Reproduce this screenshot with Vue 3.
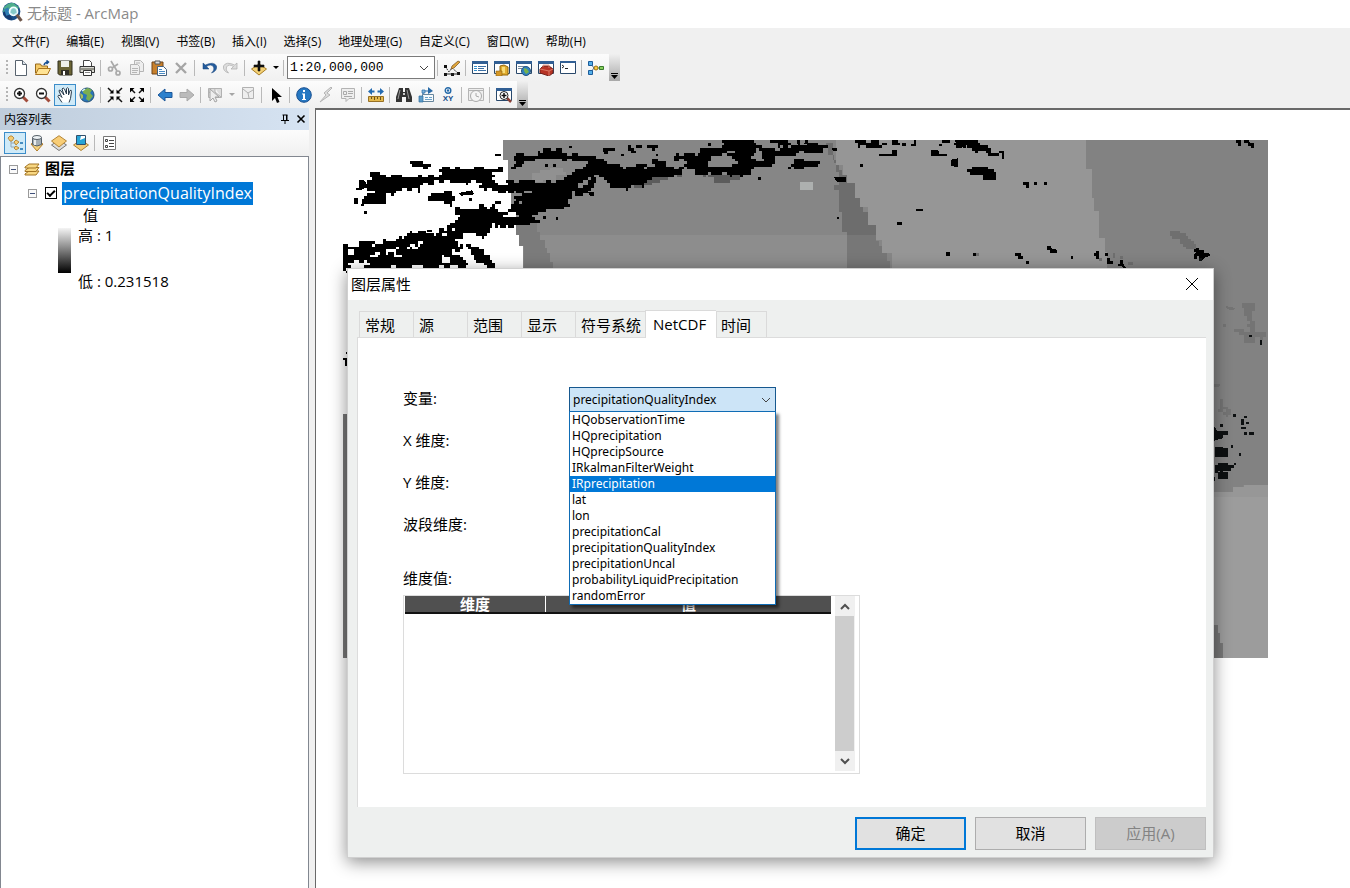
<template>
  <div class="arcmap">
    <header class="title-bar">
      <svg class="app-logo" viewBox="0 0 20 20" v-html="icons.app"></svg>
      <span>无标题 - ArcMap</span>
    </header>

    <nav class="menu-bar">
      <button v-for="menu in menus" :key="menu" type="button" class="menu-item">{{ menu }}</button>
    </nav>

    <div class="toolbars">
      <div v-for="(bar, index) in toolbars" :key="index" class="toolbar" role="toolbar">
        <span class="grip"></span>
        <template v-for="(item, i) in bar" :key="i">
          <span v-if="item === '|'" class="separator"></span>
          <button
            v-else-if="item.startsWith('caret')"
            type="button"
            class="caret"
            :class="{ dim: item === 'caretDim' }"
            aria-label="更多"
          >
            <svg viewBox="0 0 6 3"><path d="M0 0h6L3 3z" /></svg>
          </button>
          <div v-else-if="item === 'scale'" class="scale-box">
            <input v-model="scale" type="text" aria-label="比例" />
            <button type="button" aria-label="选择比例">
              <svg viewBox="0 0 10 6"><path d="M1 1l4 4 4-4" fill="none" stroke="#444" /></svg>
            </button>
          </div>
          <button
            v-else
            type="button"
            class="tool"
            :class="{ active: item === activeTool }"
            :aria-label="item"
            @click="activeTool = item"
          >
            <svg viewBox="0 0 16 16" v-html="icons[item]"></svg>
          </button>
        </template>
        <button type="button" class="overflow" aria-label="工具条选项">
          <svg viewBox="0 0 7 6"><path d="M0 0h7v1H0zM0 2h7L3.500 6z" /></svg>
        </button>
      </div>
    </div>

    <main class="workspace">
      <aside class="toc">
        <div class="toc-header">
          <span>内容列表</span>
          <button type="button" aria-label="自动隐藏">
            <svg viewBox="0 0 10 10"><path d="M2.500 1h5M3.500 1v5M6.500 1v5M7 1v5M1 6.500h8M5 7v3" fill="none" stroke="#000" /></svg>
          </button>
          <button type="button" aria-label="关闭">
            <svg viewBox="0 0 10 10"><path d="M1.500 1.500l7 7M8.500 1.500l-7 7" fill="none" stroke="#000" stroke-width="1.600" /></svg>
          </button>
        </div>
        <div class="toc-tools">
          <button
            v-for="view in tocViews"
            :key="view"
            type="button"
            class="tool"
            :class="{ active: view === tocView }"
            :aria-label="view"
            @click="tocView = view"
          >
            <svg viewBox="0 0 16 16" v-html="icons[view]"></svg>
          </button>
          <span class="separator"></span>
          <button type="button" class="tool" aria-label="选项">
            <svg viewBox="0 0 16 16" v-html="icons.options"></svg>
          </button>
        </div>
        <div class="tree">
          <div class="tree-row root">
            <button type="button" class="expander" aria-label="折叠"></button>
            <svg class="layers-icon" viewBox="0 0 16 16" v-html="icons.layers"></svg>
            <b>图层</b>
          </div>
          <div class="tree-row layer">
            <button type="button" class="expander" aria-label="折叠"></button>
            <input id="layer-visible" v-model="layerVisible" type="checkbox" />
            <label for="layer-visible">precipitationQualityIndex</label>
          </div>
          <div class="legend-title">值</div>
          <div class="legend">
            <span class="ramp"></span>
            <div class="ramp-labels">
              <span>高 : 1</span>
              <span>低 : 0.231518</span>
            </div>
          </div>
        </div>
      </aside>

      <section class="map">
        <svg class="raster" viewBox="0 0 2775 1554" shape-rendering="crispEdges">
          <path v-for="(area, i) in areas" :key="'area' + i" :d="area.d" :fill="area.fill" />
          <path v-for="(layer, i) in cells" :key="'cells' + i" :d="layer.d" :fill="layer.fill" />
        </svg>
      </section>
    </main>

    <div v-if="dialogOpen" class="dialog" role="dialog" aria-labelledby="dialog-title">
      <div class="dialog-title">
        <span id="dialog-title">图层属性</span>
        <button type="button" aria-label="关闭" @click="dialogOpen = false">
          <svg viewBox="0 0 12 12"><path d="M0 0l12 12M12 0L0 12" fill="none" stroke="#000" /></svg>
        </button>
      </div>

      <div class="tabs" role="tablist">
        <button
          v-for="tab in tabs"
          :key="tab"
          type="button"
          role="tab"
          :aria-selected="tab === currentTab"
          :class="{ current: tab === currentTab }"
          @click="currentTab = tab"
        >{{ tab }}</button>
      </div>

      <div class="page">
        <div class="field">
          <label for="variable">变量:</label>
          <div class="combo">
            <select id="variable" v-model="variable">
              <option v-for="name in variables" :key="name">{{ name }}</option>
            </select>
            <svg class="combo-arrow" viewBox="0 0 10 6"><path d="M1 1l4 4 4-4" fill="none" stroke="#444" /></svg>
            <ul class="options" role="listbox">
              <li
                v-for="name in variables"
                :key="name"
                role="option"
                :class="{ hover: name === hovered }"
                @mouseenter="hovered = name"
                @click="variable = name"
              >{{ name }}</li>
            </ul>
          </div>
        </div>
        <div class="field"><span>X 维度:</span></div>
        <div class="field"><span>Y 维度:</span></div>
        <div class="field"><span>波段维度:</span></div>
        <div class="values-label" id="values-label">维度值:</div>
        <div class="values">
          <table aria-labelledby="values-label">
            <thead>
              <tr>
                <th class="dimension">维度</th>
                <th>值</th>
              </tr>
            </thead>
          </table>
          <div class="scrollbar">
            <button type="button" aria-label="向上">
              <svg viewBox="0 0 10 7"><path d="M1 6l4-4 4 4" fill="none" stroke="#505050" stroke-width="2" /></svg>
            </button>
            <span class="thumb"></span>
            <button type="button" aria-label="向下">
              <svg viewBox="0 0 10 7"><path d="M1 1l4 4 4-4" fill="none" stroke="#505050" stroke-width="2" /></svg>
            </button>
          </div>
        </div>
      </div>

      <div class="actions">
        <button type="button" class="primary">确定</button>
        <button type="button" @click="dialogOpen = false">取消</button>
        <button type="button" disabled>应用(A)</button>
      </div>
    </div>
  </div>
</template>

<script setup>
import { ref } from 'vue';

const menus = ['文件(F)', '编辑(E)', '视图(V)', '书签(B)', '插入(I)', '选择(S)', '地理处理(G)', '自定义(C)', '窗口(W)', '帮助(H)'];

const toolbars = [
  ['new', 'open', 'save', 'print', '|', 'cut', 'copy', 'paste', 'remove', '|', 'undo', 'redo', '|',
    'addData', 'caret', '|', 'scale', '|', 'editor', '|', 'toc', 'catalog', 'search', 'toolbox', 'python', '|', 'model'],
  ['zoomIn', 'zoomOut', 'pan', 'globe', '|', 'shrink', 'expand', '|', 'back', 'forward', '|',
    'selectFeature', 'caretDim', 'clear', '|', 'pointer', '|', 'info', 'lightning', 'popup', '|',
    'measure', '|', 'find', 'route', 'xy', '|', 'time', '|', 'viewer'],
];

const tocViews = ['byOrder', 'bySource', 'byVisible', 'bySelection'];
const tabs = ['常规', '源', '范围', '显示', '符号系统', 'NetCDF', '时间'];
const variables = [
  'HQobservationTime',
  'HQprecipitation',
  'HQprecipSource',
  'IRkalmanFilterWeight',
  'IRprecipitation',
  'lat',
  'lon',
  'precipitationCal',
  'precipitationQualityIndex',
  'precipitationUncal',
  'probabilityLiquidPrecipitation',
  'randomError',
];

const scale = ref('1:20,000,000');
const activeTool = ref('pan');
const tocView = ref('byOrder');
const layerVisible = ref(true);
const dialogOpen = ref(true);
const currentTab = ref('NetCDF');
const variable = ref('precipitationQualityIndex');
const hovered = ref('IRprecipitation');

const win = '<path d="M.5 1.500h15v12H.5z" fill="#fff" stroke="#29486b"/><path d="M0 1h16v3H0z" fill="#315f94"/>';
const sheet = '<path d="M2.500 .5h7l4 4v11h-11z" fill="#fff" stroke="#58636e"/><path d="M9.500 .5v4h4" fill="#dde5ec" stroke="#58636e"/>';

const icons = {
  app: '<circle cx="9" cy="9" r="8.500" fill="#1b4f88"/><path d="M2 5q4-5 9-4l5 4-2 4-9 3-4-3z" fill="#4fae8c"/><path d="M1 11q3 6 9 6l-3-6-4-3z" fill="#163b70"/><path d="M2 7l4-2 2 7-4 1z" fill="#2f7fb4"/><circle cx="11" cy="9" r="4" fill="#d2eef5" stroke="#f4ffff" stroke-width="1.200"/><path d="M9 7q2-2 4 0l1 3-3 2-3-2z" fill="#86c9c8"/><path d="M14 12l4.500 6" stroke="#6e564a" stroke-width="3"/>',
  new: sheet,
  open: '<path d="M.5 13V4h5l1 2h6v3" fill="#f5cb68" stroke="#96691c"/><path d="M.5 14.500l3-6h12l-3 6z" fill="#ffe394" stroke="#a8731e"/><path d="M9 5q1-3 4-3M11.500 .5l2 1.500-2 2" fill="none" stroke="#174f92" stroke-width="1.500"/>',
  save: '<path d="M1 1h14v14H2.500L1 13.500z" fill="#6b6434" stroke="#302e1e"/><path d="M4 1h8v6H4z" fill="#f1f1e8"/><path d="M4 10h8v5H4z" fill="#302e26"/><path d="M6 11h2v4H6z" fill="#fff"/>',
  print: '<path d="M4.500 6V.5h6l2 2V6" fill="#fff" stroke="#454545"/><path d="M1 6.500h14.500v6H1z" fill="#d8d8d1" stroke="#333"/><path d="M2 9h13" stroke="#4e4e43"/><path d="M4.500 10.500h8v5h-8z" fill="#fff" stroke="#333"/><path d="M6 12.500h5" stroke="#888"/>',
  cut: '<g fill="none" stroke="#aaa" stroke-width="1.700"><path d="M4 1l6 10M11 4L5 8"/><circle cx="3.500" cy="9" r="2"/><circle cx="11" cy="13" r="2"/></g>',
  copy: '<g fill="#eee" stroke="#b5b5b5"><path d="M5.500 .5h6l3 3v8h-9z"/><path d="M1.500 4.500h7l2 2v8h-9z"/><path d="M3 8.500h6M3 10.500h6M3 12.500h5M7 3h4"/></g>',
  paste: '<path d="M1 2h11v12H1z" fill="#c7802c" stroke="#70451b"/><path d="M4 1h5v3H4z" fill="#ddd" stroke="#555"/><path d="M6.500 6.500h6l3 3v6h-9z" fill="#fff" stroke="#47627e"/><path d="M8 9.500h3M8 11.500h6M8 13.500h6" stroke="#4a8bc4"/>',
  remove: '<path d="M3 3l10 10M13 3L3 13" stroke="#a5a5a5" stroke-width="2.400"/>',
  undo: '<path d="M2 3v6h6L5.500 6.500q5-3 7 .5 1.500 3-2 6 6-2 5-7Q13 1 4.300 5z" fill="#245b9c" stroke="#17457d" stroke-width=".5"/>',
  redo: '<path d="M14 3v6H8l2.500-2.500q-5-3-7 .5-1.500 3 2 6-6-2-5-7Q3 1 11.700 5z" fill="#ddd" stroke="#aaa" stroke-width=".7"/>',
  addData: '<path d="M.5 9L8 4l7.500 5L8 15z" fill="#f4d175" stroke="#a77c24"/><path d="M7 1h2v4h4v2H9v4H7V7H3V5h4z" fill="#111" stroke="#111" stroke-width=".6"/>',
  editor: '<path d="M1 6l4 6 3-4 6 5" stroke="#333" fill="none" stroke-dasharray="2 1"/><path d="M0 5h3v3H0zM0 13h3v3H0zM7 13h3v3H7zM13 12h3v3h-3z" fill="#111"/><path d="M2 14h12" stroke="#222"/><path d="M7 9l1-3 6-5 2 1-6 6z" fill="#e0a63b" stroke="#765020" stroke-width=".7"/>',
  toc: win + '<path d="M2 6.500h3M2 8.500h3M2 10.500h3" stroke="#328ecc"/><path d="M6 6.500h8M6 8.500h6M6 10.500h8" stroke="#3c6fa5"/>',
  catalog: win + '<path d="M6 6l4-1 4 2v8H6z" fill="#e2ae30" stroke="#93660b"/><path d="M8 7h3v6H8z" fill="#f9dd78"/><path d="M2 11h6v5H2z" fill="#d69724" stroke="#8a6114" stroke-width=".6"/>',
  search: win + '<path d="M2 6.500h7M2 8.500h4" stroke="#76889b"/><circle cx="10" cy="11" r="4.500" fill="#2f80be" stroke="#235481"/><path d="M8 8l3 1 2 3-3 2-2-3z" fill="#78b24c"/>',
  toolbox: win + '<path d="M2 9l3-3h6l4 3v4l-4 3-9-3z" fill="#b83425" stroke="#74221a"/><path d="M5 7V5h6v3M2 9l9 2 4-2M11 11v5" fill="none" stroke="#e58a76" stroke-width=".8"/>',
  python: '<path d="M.5 1.500h15v12H.5z" fill="#fff" stroke="#29486b"/><path d="M0 1h16v2H0z" fill="#315f94"/><path d="M2 5l2 1.500L2 8M5 8.500h3" fill="none" stroke="#222"/>',
  model: '<path d="M3 4l3 4h7M3 12l3-4" fill="none" stroke="#546d87"/><path d="M.5 1.500h4v4h-4zM.5 10.500h4v4h-4z" fill="#54afe8" stroke="#1c5c9b"/><circle cx="8" cy="8" r="2" fill="#ffcc3e" stroke="#997215"/><path d="M11.500 6.500h4v3h-4z" fill="#87cf5c" stroke="#397b2c"/>',
  zoomIn: '<path d="M10 10l4.500 4.500" stroke="#a24c3b" stroke-width="3"/><circle cx="6.500" cy="6.500" r="5" fill="#fff" stroke="#333" stroke-width="1.300"/><path d="M4 6.500h5M6.500 4v5" stroke="#111" stroke-width="2"/>',
  zoomOut: '<path d="M10 10l4.500 4.500" stroke="#a24c3b" stroke-width="3"/><circle cx="6.500" cy="6.500" r="5" fill="#fff" stroke="#333" stroke-width="1.300"/><path d="M4 6.500h5" stroke="#111" stroke-width="2"/>',
  pan: '<path d="M5 15.500L1 9.500q0-2 2-1l2 2L2 4q0-2 2 0l3 4-2-6q1-2 2.500 0L9.500 7V1.500q1-1.500 2 0V8L13 3.500q1.500-1 1.500 1l-1 7-1.500 4" fill="#fff" stroke="#28394a"/>',
  globe: '<circle cx="8" cy="8" r="7" fill="#2875b9" stroke="#245077"/><path d="M4 3l5-2 4 2-2 3 3 3-4 5-3-2 1-4-4-2z" fill="#7bae50"/><path d="M1 6l3 2v3l-2 1z" fill="#a7bf61"/><path d="M3 4l3-2" stroke="#d5f2fc" stroke-width="1.500"/>',
  shrink: '<path d="M1 1l4 4M15 1l-4 4M1 15l4-4M15 15l-4-4" stroke="#111" stroke-width="1.500"/><path d="M6.500 2.500v4h-4zM9.500 2.500v4h4zM2.500 9.500h4v4zM13.500 9.500h-4v4z"/>',
  expand: '<path d="M2 2l4 4M14 2l-4 4M2 14l4-4M14 14l-4-4" stroke="#111" stroke-width="1.500"/><path d="M1 1h4.500L1 5.500zM15 1h-4.500L15 5.500zM1 15h4.500L1 10.500zM15 15h-4.500l4.500-4.500z"/>',
  back: '<path d="M1 8l7-6v3.500h7v5H8V14z" fill="#2b80cd" stroke="#1c5799"/>',
  forward: '<path d="M15 8L8 2v3.500H1v5h7V14z" fill="#bbb" stroke="#a9a9a9"/>',
  selectFeature: '<path d="M1.500 1.500h13v9h-13zM8 1v4l6 5M2 5l5 3" fill="#ddd" stroke="#b1b1b1"/><path d="M3 2v12l3-3 2 4 2-1-2-4h4z" fill="#eee" stroke="#a5a5a5"/>',
  clear: '<path d="M2.500 .5h11v11h-11zM3 2l5 4 1 5M8 6l5-3" fill="#eee" stroke="#b1b1b1"/>',
  pointer: '<path d="M4 1v13l3-3 2 5 2.500-1-2-5H14z"/>',
  info: '<circle cx="8" cy="8" r="7.300" fill="#2678c2" stroke="#184f91"/><path d="M7 3h2v2H7zM6 6.500h3V12h1v1H6v-1h1V7.500H6z" fill="#fff"/>',
  lightning: '<path d="M13 0L6 6l2 2-6 7 10-7-3-2 5-5z" fill="#ddd" stroke="#b5b5b5"/>',
  popup: '<path d="M1.500 1.500h13v10H9l-3 3v-3H1.500z" fill="#eee" stroke="#b3b3b3"/><path d="M3.500 4.500h3v3h-3zM8 4.500h5M8 6.500h5M4 9.500h8" stroke="#aaa" fill="none"/>',
  measure: '<path d="M0 4.500l4-3.500v2.500h2.500v2H4V8zM16 4.500L12 1v2.500H9.500v2H12V8z" fill="#246bb1"/><path d="M.5 9.500h15v5H.5z" fill="#e4b94d" stroke="#987125"/><path d="M3.500 10v2M6.500 10v3M9.500 10v2M12.500 10v3" stroke="#6e511a"/>',
  find: '<path d="M3 1h4v4h2V1h4l3 9v5h-6v-5H6v5H0v-5z" fill="#333"/><path d="M4 3l-2 9M11 3l2 9" stroke="#999"/><path d="M7 6h2v2H7z" fill="#ccc"/>',
  route: '<path d="M5 8V4h6" fill="none" stroke="#286aa7" stroke-width="1.200"/><path d="M10 0l5 4-5 3z" fill="#286aa7"/><path d="M4 3h3v3H4z" fill="#7fb5dd" stroke="#286aa7" stroke-width=".7"/><path d="M4.500 7.500h11v7h-11z" fill="#f6fafc" stroke="#66859c"/><path d="M7 10.500h3M11 10.500h3M7 12.500h7" stroke="#6da2c9"/><path d="M1 9h4v6H1z" fill="#5b9bc9" stroke="#2f6d9e" stroke-width=".7"/>',
  xy: '<circle cx="8" cy="3.500" r="2.800" fill="#fff" stroke="#2469a8" stroke-width="1.400"/><circle cx="8" cy="3.500" r="1.200" fill="#2469a8"/><text x="8" y="14" text-anchor="middle" font-family="Liberation Sans, sans-serif" font-size="8" font-weight="bold" fill="#174f8c">XY</text>',
  time: '<path d="M.5 1.500h15v12H.5zM1 3.500h14" fill="#eee" stroke="#b5b5b5"/><circle cx="8" cy="9" r="5.500" fill="#f5f5f5" stroke="#aaa"/><path d="M8 6v3l3 1" stroke="#aaa" fill="none"/>',
  viewer: win + '<path d="M11 11l4 4" stroke="#8c4035" stroke-width="2.500"/><circle cx="8" cy="8.500" r="4" fill="#fff" stroke="#222"/><path d="M5.500 8.500h5M8 6v5" stroke="#111" stroke-width="1.500"/>',
  byOrder: '<path d="M4 4v8h5M4 8h5" fill="none" stroke="#93a6b6"/><g fill="#f7cd73" stroke="#a97929" stroke-width=".8"><path d="M1 3l2-2h2l2 2-2 3H3zM7 7l2-2 3 2-3 3zM7 13l2-2 3 2-3 2z"/></g><path d="M13 8h3M13 14h3" stroke="#1b6faf" stroke-width="1.500"/>',
  bySource: '<path d="M2 9l6-3 6 3-6 7z" fill="#f4d380" stroke="#b27d28"/><path d="M3.500 2.500v7q4.500 3 9 0v-7" fill="#a5afb6" stroke="#555f67"/><ellipse cx="8" cy="2.500" rx="4.500" ry="2" fill="#edf2f5" stroke="#555f67"/><path d="M6 5v5" stroke="#e8edf0" stroke-width="2"/>',
  byVisible: '<path d="M.5 10L8 5l7.500 5L8 15.500z" fill="#ddd" stroke="#777"/><path d="M.5 6L8 .7 15.500 6 8 12z" fill="#f8cd76" stroke="#b38435"/>',
  bySelection: '<path d="M.5 10L8 5l7.500 5L8 15.500z" fill="#f4cf7c" stroke="#ae8235"/><path d="M3.500 .5h9v9h-9z" fill="#fff" stroke="#31506b"/><path d="M4 1h4l-1 4 5-2v6H4z" fill="#28a5d7"/>',
  options: '<path d="M2.500 1.500h12v13h-12z" fill="#fff" stroke="#777"/><path d="M4.500 4.500h2v2h-2zM4.500 10.500h2v2h-2z" fill="none" stroke="#444"/><path d="M8 5.500h5M8 8.500h5M8 11.500h5" stroke="#444"/>',
  layers: '<g fill="#f8d782" stroke="#a27424"><path d="M1 13l4-3h10l-3 4H1z"/><path d="M1 9.500l4-3h10l-3 4H1z"/><path d="M1 6l4-3h10l-3 4H1z"/></g>',
};

// 栅格底色分区，单位为三分之一像素
const areas = [
  { fill: '#868686', d: 'M480 0H2775V1554H0V822H540V317H528V260H520V195H504V125H496V60H480Z' },
  { fill: '#8d8d8d', d: 'M543 285H1520V400H543Z' },
  { fill: '#7b7b7b', d: 'M520 250H581V275H590V300H605V325H613V340H621V365H629V400H543V317H528V285H520Z' },
  { fill: '#969696', d: 'M1448 0H2229V86H2247V173H2253V213H2268V294H2286V335H2292V400H1646V340H1616V300H1598V254H1576V200H1551V173H1536V130H1501V75H1480V0Z' },
  { fill: '#6d6d6d', d: 'M1448 10H1471V60H1480V75H1488V90H1496V105H1511V130H1536V173H1551V200H1561V215H1576V254H1598V285H1512V277H1497V215H1488V150H1474V135H1488V96H1480V70H1472V45H1456V18H1448Z' },
  { fill: '#777777', d: 'M1512 285H1598V302H1608V318H1616V340H1633V362H1641V400H1512Z' },
  { fill: '#adb0af', d: 'M1371 126H1410V149H1371Z' },
  { fill: '#919191', d: 'M566 100H590V90H620V85H660V95H668V105H640V120H600V126H566Z' },
  { fill: '#828282', d: 'M2229 0H2775V1035H2700V1040H2670V1055H2500V400H2292V335H2286V294H2268V213H2253V173H2247V86H2229Z' },
  { fill: '#979797', d: 'M2500 1055H2670V1040H2703V1035H2775V1554H2500Z' },
  { fill: '#9c9c9c', d: 'M2500 1072H2775V1554H2500Z' },
  { fill: '#777777', d: 'M2613 1455H2625V1480H2632V1510H2640V1554H2500V1455Z' },
  { fill: '#787878', d: 'M0 822H60V1554H0Z' },
  { fill: '#000000', d: 'M0 654H14V678H6V660H0Z' },
  { fill: '#000000', d: 'M8 636H14V642H8Z' },
];

// 每组多边形共用一个原点，落到栅格单元上再绘制
const groups = [
  {
    fill: '#5c5c5c', dx: 876, dy: -105,
    shapes: ['0,230 60,215 92,214 92,222 30,246 0,250', '130,190 142,192 142,215 125,215', '180,200 230,212 320,205 322,222 280,232 250,230 190,210'],
  },
  {
    fill: '#000', dx: -84, dy: -105,
    shapes: [
      '162,206 195,202 205,214 300,216 375,214 375,188 450,186 480,184 510,186 525,192 565,192 562,202 530,206 548,218 490,230 430,236 400,232 340,234 322,238 318,258 290,252 245,258 235,268 205,272 212,292 195,302 160,300 140,286 150,276 175,264 158,250 152,228 170,222',
      '131,226 148,226 156,240 148,250 131,254', '124,248 140,248 140,256 124,256', '172,240 215,240 215,262 180,262',
      '282,168 310,168 326,178 345,184 345,192 322,190 300,182', '540,146 558,146 558,154 540,154', '118,280 130,280 130,297 118,297', '147,318 156,318 156,327 147,327', '138,296 147,296 147,304 138,304', '308,210 322,210 322,217 308,217',
      '498,232 510,222 535,224 550,238 600,240 600,262 560,264 545,256 520,256 498,252',
      '338,282 350,266 380,262 410,256 420,282 400,292 418,306 395,300 370,286 345,296', '430,264 470,256 480,268 440,272', '540,288 558,288 558,297 540,297', '462,280 470,280 470,288 462,288',
      '415,304 440,303 450,314 478,312 484,300 506,300 510,312 540,300 545,318 568,320 590,302 630,305 670,300 680,318 660,326 645,342 675,346 640,360 580,364 550,374 545,352 530,372 515,390 500,398 480,386 460,384 440,396 400,398 400,352 415,350 432,344',
      '84,422 130,424 130,412 160,408 180,422 210,404 250,406 290,380 335,380 345,390 362,376 385,376 388,392 400,382 404,362 430,355 460,378 430,400 415,412 440,425 430,450 470,480 440,488 380,482 375,488 150,488 165,474 130,468 100,480 92,500 84,500',
      '336,374 352,374 352,382 336,382',
      '450,410 465,418 500,436 520,456 548,489 520,489 490,466 460,436',
      '565,152 600,156 610,150 665,152 672,142 700,130 745,130 740,150 820,152 870,166 880,178 905,178 920,190 960,188 975,180 992,178 992,244 960,244 940,250 890,250 880,232 850,208 820,222 790,235 770,262 760,300 740,316 690,318 650,322 600,310 590,295 620,288 590,278 620,270 590,255 625,244 575,236 575,226 720,230 750,215 790,200 815,190 815,168 680,164 640,170 620,180 600,190 590,188 610,166',
      '775,250 800,246 820,230 835,214 850,212 852,224 835,240 832,256 812,262 800,274 780,276', '820,262 838,262 838,272 824,272', '748,280 758,280 758,296 748,296',
      '690,176 699,176 699,186 690,186', '713,176 722,176 722,186 713,186', '762,122 772,122 772,130 762,130', '864,130 900,128 900,138 880,138 880,146 866,146', '925,124 992,122 992,130 960,132 960,147 930,144 945,136', '918,146 928,146 928,153 918,153', '684,334 692,334 692,342 684,342', '722,336 730,336 730,344 722,344',
    ],
    holes: ['275,415 325,411 320,424 280,430', '375,458 392,454 410,470 385,476', '355,376 372,376 370,388 350,390', '484,302 492,302 492,312 484,312', '565,330 600,326 604,340 570,340', '100,440 122,436 120,448 100,448', '210,432 250,428 245,440 214,444', '160,450 188,444 186,456 164,458', '240,446 254,446 254,462 240,462', '412,436 436,436 436,450 412,450', '430,405 448,412 440,424 430,420', '415,338 426,338 426,350 415,350', '412,366 422,366 422,376 412,376', '630,262 648,262 648,270 630,270'],
  },
  {
    fill: '#000', dx: 876, dy: -105,
    shapes: [
      '0,178 30,176 60,168 118,160 120,148 190,148 200,130 250,128 275,116 255,105 368,105 370,118 390,128 440,130 425,112 410,112 410,105 455,105 470,116 490,122 540,116 590,122 590,134 572,136 572,148 540,144 500,140 470,152 420,152 415,185 380,190 345,190 345,215 300,206 290,214 275,200 260,206 240,215 220,202 205,212 180,206 160,188 142,188 142,196 130,214 60,218 20,236 0,246',
      '448,188 470,178 475,174 475,162 500,164 512,172 557,168 545,184 500,190', '0,122 62,122 62,130 0,130', '220,114 229,114 229,122 220,122', '485,105 495,105 495,120 485,118', '510,105 518,105 518,118 508,118', '62,146 69,146 69,154 62,154',
      '660,105 680,105 700,112 708,106 718,108 730,106 734,116 790,112 795,122 740,122 735,130 700,130 665,122', '732,146 770,146 772,136 785,136 785,154 732,154', '888,136 910,136 912,146 935,146 935,154 888,154', '948,164 968,160 968,187 948,182', '958,105 992,105 992,130 970,122', '597,216 632,216 632,230 605,230', '590,128 605,130 605,138 590,136',
      '676,176 685,176 685,186 676,186', '369,216 378,216 378,224 369,224', '605,335 613,335 613,343 605,343', '843,311 864,311 864,319 843,319', '786,350 801,350 801,360 786,360', '934,442 946,442 946,452 934,452', '828,118 836,118 836,105 843,105 843,124 828,124', '802,114 812,114 812,124 802,124', '920,105 945,105 945,113 920,113', '912,116 921,116 921,123 912,123',
    ],
    holes: ['226,154 280,150 305,166 295,186 230,186', '92,168 118,162 150,168 155,184 110,188 95,182', '355,140 380,134 380,168 350,160', '30,184 62,180 62,190 30,192', '270,138 305,134 300,142 270,146', '455,124 468,124 468,134 455,134'],
  },
  {
    fill: '#000', dx: 1836, dy: -105,
    shapes: [
      '0,105 85,105 75,116 95,122 110,132 120,146 136,148 136,138 150,138 150,146 140,152 140,160 134,160 134,152 98,152 90,140 60,138 50,128 0,122', '0,162 8,162 8,186 0,186', '38,186 96,188 96,184 112,186 117,192 117,224 88,224 86,210 38,208', '204,232 222,232 222,249 213,249 213,241 204,241', '236,232 245,232 245,241 236,241', '267,232 276,232 276,241 267,241',
      '843,105 858,105 858,122 850,122 850,113 843,113', '868,105 882,105 882,112 897,114 897,128 889,128 889,122 878,122 878,114 868,114', '276,422 288,422 288,430 305,434 305,444 284,444 284,434 276,434', '180,444 198,444 198,452 204,452 204,461 190,461 190,452 180,452', '212,467 222,467 222,476 212,476', '347,453 355,453 355,462 347,462', '54,443 63,443 63,453 54,453', '417,444 424,444 424,439 432,439 432,462 424,462 424,453 417,453', '450,444 458,444 458,453 450,453', '456,460 464,460 464,468 473,468 473,476 456,476', '496,466 505,466 505,476 512,488 504,488 498,482 490,482 490,476 496,476', '716,428 733,428 733,436 748,436 748,444 765,446 764,454 750,456 742,466 733,466 733,456 725,450 725,462 718,462 718,446 725,444 716,440',
    ],
  },
  {
    fill: '#6f6f6f', dx: 1836, dy: -105,
    shapes: ['645,380 680,382 710,405 726,430 700,430 660,402', '473,444 481,444 481,460 473,460', '496,454 504,454 504,461 496,461', '520,470 534,470 534,480 520,480', '432,460 440,460 440,468 432,468', '63,443 71,443 71,453 63,453'],
  },
  {
    fill: '#747474', dx: 2511, dy: 360,
    shapes: ['182,128 220,126 222,215 262,226 262,232 225,236 220,252 195,246 190,226 145,208 200,214 206,180', '138,138 165,144 160,152 140,146', '128,192 138,192 138,200 128,200', '102,372 120,372 118,382 102,382', '120,410 130,430 155,450 150,470 120,460 104,455 130,450'],
  },
  {
    fill: '#0d1011', dx: 2511, dy: 360,
    shapes: ['102,500 112,512 145,514 145,526 130,526 130,534 102,542', '106,560 145,564 145,592 106,592', '102,610 168,612 150,622 152,630 130,634 102,632', '114,636 145,636 145,656 114,656', '102,650 105,650 105,664 102,664', '158,462 167,462 167,470 158,470', '183,478 192,478 192,494 183,494', '192,467 201,467 201,475 192,475', '199,485 207,485 207,492 199,492', '183,500 199,500 199,508 183,508', '191,516 201,516 201,525 191,525', '208,516 221,516 221,525 208,525', '176,578 184,578 184,587 176,587', '207,224 216,224 216,232 207,232', '239,239 246,239 246,255 239,255', '119,492 128,492 128,501 119,501', '152,555 160,555 160,564 152,564', '57,-6 67,-6 67,4 57,4'],
    holes: ['118,566 122,566 122,590 118,590', '128,634 134,634 134,642 128,642', '118,535 124,535 124,612 118,612'],
  },
];

const CELL = 8;

function parse(shape) {
  return shape.split(' ').map((pair) => pair.split(',').map(Number));
}

function inside(points, x, y) {
  let hit = false;
  for (let i = 0, j = points.length - 1; i < points.length; j = i++) {
    const [xi, yi] = points[i];
    const [xj, yj] = points[j];
    if (yi > y !== yj > y && x < ((xj - xi) * (y - yi)) / (yj - yi) + xi) hit = !hit;
  }
  return hit;
}

// 固定的伪随机偏移，让边缘呈现栅格的锯齿
function noise(a, b) {
  const n = Math.sin(a * 12.9898 + b * 78.233) * 43758.5453;
  return n - Math.floor(n) - 0.5;
}

function rasterize(group) {
  const holes = (group.holes || []).map(parse);
  let d = '';
  group.shapes.map(parse).forEach((points) => {
    const xs = points.map((p) => p[0]);
    const ys = points.map((p) => p[1]);
    const width = Math.max(...xs) - Math.min(...xs);
    const height = Math.max(...ys) - Math.min(...ys);
    if (width < 60 && height < 45) {
      d += `M${points.map(([x, y]) => `${x + group.dx} ${y + group.dy}`).join('L')}Z`;
      return;
    }
    for (let row = Math.floor((Math.min(...ys) + group.dy) / CELL); row * CELL < Math.max(...ys) + group.dy; row++) {
      let start = null;
      const first = Math.floor((Math.min(...xs) + group.dx) / CELL);
      const last = Math.ceil((Math.max(...xs) + group.dx) / CELL) + 1;
      for (let col = first; col <= last; col++) {
        const x = col * CELL + 4 - group.dx + noise(Math.floor(col / 2), row) * 12;
        const y = row * CELL + 4 - group.dy + noise(row, Math.floor(col / 2)) * 10;
        const filled = row >= 0 && inside(points, x, y) && !holes.some((hole) => inside(hole, x, y));
        if (filled && start === null) start = col;
        if (!filled && start !== null) {
          d += `M${start * CELL} ${row * CELL}H${col * CELL}v${CELL}H${start * CELL}Z`;
          start = null;
        }
      }
    }
  });
  return d;
}

const cells = groups.map((group) => ({ fill: group.fill, d: rasterize(group) }));
</script>

<style>
body {
  margin: 0;
}
</style>

<style scoped>
.arcmap {
  position: relative;
  display: flex;
  flex-direction: column;
  min-height: 100vh;
  background: #f0f0f0;
  color: #000;
  font-family: 'Open Sans', 'Noto Sans CJK SC', sans-serif;
  font-size: 15px;
  overflow: hidden;
}

button,
input,
select {
  font: inherit;
  color: inherit;
  margin: 0;
  padding: 0;
  border: 0;
  border-radius: 0;
  background: none;
  box-sizing: border-box;
}

svg {
  display: block;
}

.title-bar {
  display: flex;
  align-items: center;
  gap: 4px;
  height: 25px;
  padding: 0 0 3px 2px;
  background: #fff;
  color: #8a8a8a;
}

.app-logo {
  width: 21px;
  height: 21px;
}

.menu-bar {
  display: flex;
  height: 26px;
  padding-left: 4px;
}

.menu-item {
  padding: 0 9px 0 8px;
  font-size: 12px;
  white-space: nowrap;
}

.toolbar {
  display: flex;
  align-items: center;
  width: max-content;
  height: 27px;
  background: linear-gradient(#fcfcfc, #f0f0f0);
}

.grip {
  width: 2px;
  height: 16px;
  margin: 0 2px 0 6px;
  background: repeating-linear-gradient(#b4b4b4 0 2px, transparent 2px 4px);
}

.tool {
  display: flex;
  align-items: center;
  justify-content: center;
  width: 22px;
  height: 22px;
}

.tool svg {
  width: 16px;
  height: 16px;
}

.tool.active {
  border: 1px solid #3c8dc9;
  background: #cfeaf8;
}

.separator {
  width: 1px;
  height: 16px;
  margin: 0 3px 0 2px;
  background: #b9b9b9;
}

.caret {
  display: flex;
  align-items: center;
  justify-content: center;
  width: 11px;
  height: 22px;
}

.caret svg {
  width: 6px;
  height: 3px;
}

.caret.dim {
  fill: #a5a5a5;
}

.scale-box {
  display: flex;
  width: 148px;
  height: 23px;
  border: 1px solid #7a7a7a;
  background: #fff;
  box-sizing: border-box;
}

.scale-box input {
  flex: 1;
  min-width: 0;
  padding-left: 2px;
  font-family: 'Liberation Mono', monospace;
  font-size: 13px;
}

.scale-box button {
  width: 20px;
}

.scale-box svg {
  width: 10px;
  height: 6px;
  margin: 0 auto;
}

.overflow {
  display: flex;
  align-items: flex-end;
  justify-content: center;
  align-self: stretch;
  width: 11px;
  margin-left: 2px;
  padding-bottom: 2px;
  background: linear-gradient(#f0f0f0, #a8a8a8);
}

.overflow svg {
  width: 7px;
  height: 6px;
}

.workspace {
  display: flex;
  flex: 1;
}

.toc {
  display: flex;
  flex-direction: column;
  width: 309px;
  margin-right: 6px;
}

.toc-header {
  display: flex;
  align-items: center;
  height: 22px;
  padding-left: 4px;
  background: linear-gradient(90deg, #bfcddc, #d6e3f2);
  font-size: 12px;
}

.toc-header span {
  flex: 1;
}

.toc-header button {
  width: 16px;
}

.toc-header svg {
  width: 10px;
  height: 10px;
  margin: 0 auto;
}

.toc-tools {
  display: flex;
  align-items: center;
  height: 26px;
  padding-left: 4px;
  background: linear-gradient(#fcfcfc, #f0f0f0);
}

.tree {
  flex: 1;
  border: 1px solid #828790;
  border-bottom: 0;
  background: #fff;
}

.tree-row {
  display: flex;
  align-items: center;
  height: 24px;
}

.root {
  padding-left: 8px;
}

.root b {
  line-height: 20px;
  padding-bottom: 2px;
}

.layer {
  padding-left: 27px;
}

.expander {
  width: 9px;
  height: 9px;
  border: 1px solid #9a9a9a;
  background: linear-gradient(#3f4f7a, #3f4f7a) center / 5px 1px no-repeat #fafafa;
}

.layers-icon {
  width: 16px;
  height: 16px;
  margin: 0 5px 0 6px;
}

.layer input {
  width: 12px;
  height: 12px;
  margin: 0 5px 0 8px;
  appearance: none;
  border: 1px solid #000;
  background: #fff;
}

.layer input:checked::after {
  content: '';
  display: block;
  width: 6px;
  height: 3px;
  margin: 2px 1px;
  border-left: 2px solid #000;
  border-bottom: 2px solid #000;
  transform: rotate(-45deg);
}

.layer label {
  padding: 0 1px;
  background: #0078d7;
  color: #fff;
  font-size: 16px;
  line-height: 23px;
}

.legend-title {
  padding-left: 82px;
  line-height: 20px;
}

.legend {
  display: flex;
  gap: 7px;
  padding-left: 57px;
}

.ramp {
  width: 13px;
  height: 45px;
  margin-top: 3px;
  background: linear-gradient(#f4f4f4, #7c7c7c 50%, #000);
}

.ramp-labels {
  display: flex;
  flex-direction: column;
  gap: 26px;
  line-height: 20px;
}

.map {
  flex: 1;
  min-width: 0;
  padding: 30px 82px 0 27px;
  border-top: 2px solid #696969;
  border-left: 1px solid #696969;
  background: #fff;
}

.raster {
  width: 100%;
}

/* 图层属性对话框浮在地图之上 */
.dialog {
  position: absolute;
  top: 268px;
  left: 347px;
  right: 136px;
  background: #eef0ef;
  border: 1px solid #d0d0d0;
  box-sizing: border-box;
  box-shadow: 0 4px 16px rgba(0, 0, 0, 0.45);
}

.dialog-title {
  display: flex;
  align-items: center;
  justify-content: space-between;
  height: 29px;
  padding: 0 15px 2px 3px;
  background: #fff;
}

.dialog-title svg {
  width: 12px;
  height: 12px;
}

.tabs {
  display: flex;
  align-items: flex-end;
  padding: 10px 0 0 11px;
}

.tabs button {
  min-width: 54px;
  height: 26px;
  padding: 0 4px 0 5px;
  border: 1px solid #dadada;
  border-width: 1px 0 0 1px;
  text-align: left;
  white-space: nowrap;
}

.tabs button:last-child {
  min-width: 51px;
  padding-left: 4px;
  border-right-width: 1px;
}

.tabs .current {
  position: relative;
  min-width: 71px;
  height: 28px;
  margin-bottom: -1px;
  padding: 0 7px 2px;
  background: #fff;
}

.page {
  margin: 0 7px 0 9px;
  padding: 40px 45px 33px;
  border: 1px solid #dcdcdc;
  border-width: 1px 0 0 1px;
  background: #fff;
}

.field {
  display: flex;
  align-items: center;
  height: 42px;
}

.field label,
.field span {
  width: 166px;
  padding-bottom: 4px;
}

.combo {
  position: relative;
  width: 207px;
  font-family: 'Noto Sans', sans-serif;
  font-size: 12px;
}

.combo select {
  display: block;
  width: 100%;
  height: 25px;
  padding: 0 20px 0 3px;
  appearance: none;
  border: 1px solid #16588f;
  background: #cce4f7;
}

.combo-arrow {
  position: absolute;
  top: 10px;
  right: 5px;
  width: 10px;
  height: 6px;
  pointer-events: none;
}

.options {
  position: absolute;
  top: 24px;
  left: 0;
  right: 0;
  z-index: 1;
  margin: 0;
  padding: 0;
  border: 1px solid #0f6cb5;
  background: #fff;
  list-style: none;
  box-shadow: 3px 3px 3px rgba(0, 0, 0, 0.5);
}

.options li {
  padding-left: 2px;
  line-height: 16px;
}

.options .hover {
  background: #0078d7;
  color: #fff;
}

.values-label {
  margin-top: 20px;
  line-height: 24px;
}

.values {
  display: flex;
  justify-content: space-between;
  width: 457px;
  max-width: 100%;
  height: 179px;
  margin-top: 5px;
  padding: 0 4px 2px 1px;
  border: 1px solid #dcdcdc;
  box-sizing: border-box;
}

.values table {
  flex: 1;
  align-self: flex-start;
  margin-right: 4px;
  border-collapse: collapse;
  table-layout: fixed;
  background: #505050;
  color: #fff;
}

.values th {
  height: 16px;
  padding: 0;
  border-bottom: 2px solid #111;
  font-size: 15px;
  line-height: 16px;
}

.values .dimension {
  width: 140px;
  border-right: 1px solid #fff;
}

.scrollbar {
  display: flex;
  flex-direction: column;
  width: 20px;
  background: #f0f0f0;
}

.scrollbar button {
  height: 20px;
}

.scrollbar svg {
  width: 10px;
  height: 7px;
  margin: 0 auto;
}

.thumb {
  flex: 1;
  margin-right: 1px;
  background: #cdcdcd;
}

.actions {
  display: flex;
  justify-content: flex-end;
  gap: 9px;
  padding: 10px 7px 7px;
}

.actions button {
  width: 111px;
  height: 33px;
  padding-bottom: 2px;
  border: 1px solid #adadad;
  background: #e1e1e1;
}

.actions .primary {
  border: 2px solid #0078d7;
}

.actions button:disabled {
  border-color: #bfbfbf;
  background: #ccc;
  color: #838383;
}
</style>
